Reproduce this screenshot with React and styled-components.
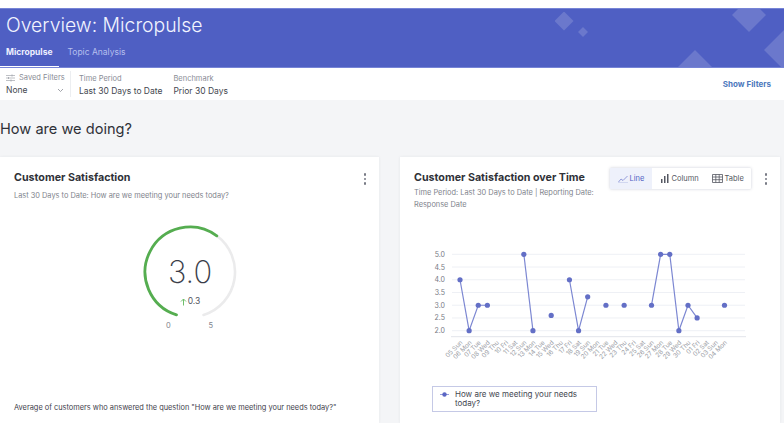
import React from "react";
import styled, { createGlobalStyle } from "styled-components";

const GlobalStyle = createGlobalStyle`
  html, body {
    margin: 0;
    padding: 0;
    background: #fff;
    overflow: hidden;
  }
  * {
    box-sizing: border-box;
  }
`;

const Page = styled.div`
  display: flex;
  flex-direction: column;
  width: 784px;
  height: 415px;
  margin-top: 8px;
  overflow: hidden;
  background: #f4f5f7;
  font-family: Inter, "Liberation Sans", sans-serif;
  color: #33363f;
`;

const Header = styled.header`
  position: relative;
  flex: none;
  height: 60px;
  overflow: hidden;
  background: #4f5fc3;
  border-top: 1px solid #7684d6;
  border-bottom: 1px solid #7684d6;
`;

const Diamond = styled.span`
  position: absolute;
  left: ${p => p.$x - p.$r}px;
  top: ${p => p.$y - p.$r - 9}px;
  width: ${p => p.$r * 2}px;
  height: ${p => p.$r * 2}px;
  background: rgba(255, 255, 255, 0.16);
  clip-path: polygon(50% 0, 100% 50%, 50% 100%, 0 50%);
`;

const Title = styled.h1`
  margin: 0;
  padding: 2px 0 0 6px;
  font-size: 19.4px;
  line-height: 29px;
  font-weight: 300;
  color: #f2f4ff;
`;

const Tabs = styled.nav`
  display: flex;
  gap: 9px;
  margin-top: 5px;
`;

const Tab = styled.div`
  padding: 0 ${p => (p.$active ? "7px" : "0")} 0 6px;
  margin-right: ${p => (p.$active ? "-7px" : "0")};
  height: 23px;
  font-size: 8.5px;
  line-height: 14px;
  font-weight: ${p => (p.$active ? 700 : 400)};
  color: ${p => (p.$active ? "#eef0ff" : "#b6bfee")};
  border-bottom: ${p => (p.$active ? "2px solid #fff" : "none")};
`;

const FilterBar = styled.div`
  display: flex;
  flex: none;
  align-items: center;
  height: 32px;
  padding: 0 13px 0 6px;
  background: #fff;
`;

const SavedFilter = styled.div`
  width: 65px;
  height: 26px;
  padding-right: 6px;
  border-right: 1px solid #eceef1;
`;

const Filter = styled.div`
  margin-left: ${p => p.$gap}px;
`;

const FilterLabel = styled.div`
  display: flex;
  align-items: center;
  gap: 4px;
  height: 13px;
  font-size: 7.5px;
  color: #8a8d96;
  white-space: nowrap;
`;

const FilterValue = styled.div`
  display: flex;
  align-items: center;
  justify-content: space-between;
  height: 12px;
  font-size: 8.5px;
  color: #444750;
  white-space: nowrap;
`;

const ShowFilters = styled.div`
  margin-left: auto;
  font-size: 8px;
  font-weight: 700;
  color: #4c79bd;
`;

const Heading = styled.h2`
  flex: none;
  margin: 0;
  padding-top: 20px;
  height: 57px;
  font-size: 14.6px;
  line-height: 19px;
  font-weight: 400;
  color: #2f3138;
`;

const Cards = styled.div`
  display: grid;
  flex: 1;
  grid-template-columns: 379px 380px;
  gap: 21px;
`;

const Card = styled.section`
  display: flex;
  flex-direction: column;
  min-width: 0;
  padding: 14px 0 0 14px;
  background: #fff;
  box-shadow: 0 0 3px rgba(30, 40, 70, 0.07);
`;

const CardTop = styled.div`
  display: flex;
  align-items: flex-start;
`;

const CardHeading = styled.div`
  flex: 1;
  min-width: 0;
`;

const CardTitle = styled.h3`
  margin: 0;
  font-size: 10.7px;
  line-height: 13px;
  font-weight: 700;
  color: #2f3138;
  white-space: nowrap;
`;

const CardNote = styled.p`
  width: ${p => p.$width || "auto"};
  margin: ${p => p.$top || 6}px 0 0;
  font-size: 7.4px;
  line-height: 12px;
  color: #80838c;
`;

const Kebab = styled.div`
  display: flex;
  flex: none;
  flex-direction: column;
  gap: 2px;
  margin: 2px 13px 0 0;
  & > i {
    display: block;
    width: 2.5px;
    height: 2.5px;
    border-radius: 50%;
    background: #777a84;
  }
`;

const Segments = styled.div`
  display: flex;
  flex: none;
  height: 21px;
  margin: -3px 14px 0 0;
  background: #fff;
  box-shadow: 0 0 3px rgba(40, 50, 90, 0.25);
  border-radius: 1px;
`;

const Segment = styled.div`
  display: flex;
  align-items: center;
  gap: 2px;
  width: ${p => p.$width}px;
  padding-left: 8px;
  font-size: 7.5px;
  color: ${p => (p.$active ? "#4f5fc3" : "#555862")};
  background: ${p => (p.$active ? "#eef1fb" : "transparent")};
`;

const GaugeWrap = styled.div`
  position: relative;
  width: 100px;
  height: 118px;
  margin: 16px 0 0 126px;
`;

const GaugeText = styled.div`
  position: absolute;
  top: 35px;
  left: 0;
  width: 100%;
  text-align: center;
`;

const GaugeValue = styled.div`
  font-size: 31px;
  line-height: 38px;
  font-weight: 200;
  color: #3a3d49;
`;

const GaugeDelta = styled.div`
  display: flex;
  align-items: center;
  justify-content: center;
  gap: 1px;
  margin-top: 5px;
  font-size: 8.5px;
  line-height: 11px;
  color: #555862;
`;

const GaugeScale = styled.div`
  position: absolute;
  top: 103px;
  left: 26px;
  display: flex;
  justify-content: space-between;
  width: 47px;
  font-size: 7.5px;
  color: #80838c;
`;

const Footnote = styled.p`
  margin: auto 0 9px;
  font-size: 7.4px;
  line-height: 12px;
  color: #3f424c;
  white-space: nowrap;
`;

const ChartBody = styled.div`
  margin: 29px 0 0 -14px;
`;

const Legend = styled.div`
  display: flex;
  align-items: flex-start;
  gap: 6px;
  width: 165px;
  height: 26px;
  margin: 11px 0 0 32px;
  padding: 3px 8px 0 7px;
  border: 1px solid #c5c9e6;
  font-size: 8px;
  line-height: 9px;
  color: #444750;
`;

const Ticks = ["5.0", "4.5", "4.0", "3.5", "3.0", "2.5", "2.0"];
const Days = [
  "05 Sun", "06 Mon", "07 Tue", "08 Wed", "09 Thu", "10 Fri", "11 Sat", "12 Sun", "13 Mon", "14 Tue",
  "15 Wed", "16 Thu", "17 Fri", "18 Sat", "19 Sun", "20 Mon", "21 Tue", "22 Wed", "23 Thu", "24 Fri",
  "25 Sat", "26 Sun", "27 Mon", "28 Tue", "29 Wed", "30 Thu", "01 Fri", "02 Sat", "03 Sun", "04 Mon"
];
// null = no responses that day, breaks the line
const Scores = [
  4, 2, 3, 3, null, null, null, 5, 2, null, 2.6, null, 4, 2, 3.33, null, 3, null, 3, null, null, 3, 5, 5, 2, 3,
  2.5, null, null, 3
];

const xAt = i => 460 + i * 9.12;
const yAt = v => 330.7 - (v - 2) * 25.47;

function lineSegments() {
  const runs = [];
  let run = [];
  Scores.forEach((v, i) => {
    if (v === null) {
      if (run.length > 1) runs.push(run);
      run = [];
    } else {
      run.push(`${xAt(i)},${yAt(v)}`);
    }
  });
  if (run.length > 1) runs.push(run);
  return runs.map(r => r.join(" "));
}

function LineChart() {
  return (
    <svg width="380" height="135" viewBox="400 240 380 135" style={{ display: "block" }}>
      {Ticks.map(t => (
        <g key={t}>
          <line x1="452" x2="745" y1={yAt(+t)} y2={yAt(+t)} stroke="#eef0f5" strokeWidth="1" />
          <text x="445" y={yAt(+t) + 2.5} textAnchor="end" fontSize="7" fill="#777a84">
            {t}
          </text>
        </g>
      ))}
      <line x1="451" x2="746" y1="336.7" y2="336.7" stroke="#e2e4ea" />
      {lineSegments().map(p => (
        <polyline key={p} points={p} fill="none" stroke="#7c87d2" strokeWidth="1.2" />
      ))}
      {Scores.map((v, i) => v !== null && <circle key={i} cx={xAt(i)} cy={yAt(v)} r="2.6" fill="#636fc6" />)}
      {Days.map((d, i) => (
        <text
          key={d}
          x={xAt(i) + 3}
          y="343"
          textAnchor="end"
          fontSize="6.4"
          fill="#9a9da5"
          transform={`rotate(-45 ${xAt(i) + 3} 343)`}
        >
          {d}
        </text>
      ))}
    </svg>
  );
}

function Gauge() {
  return (
    <GaugeWrap>
      <svg width="100" height="100" viewBox="140 218 100 100" style={{ display: "block" }}>
        <path d="M216.8 235.8 A45 45 0 0 1 203.5 314.9" fill="none" stroke="#ebebec" strokeWidth="2.6" strokeLinecap="round" />
        <path d="M176.5 314.9 A45 45 0 1 1 216.8 235.8" fill="none" stroke="#55ad50" strokeWidth="2.8" strokeLinecap="round" />
      </svg>
      <GaugeText>
        <GaugeValue>3.0</GaugeValue>
        <GaugeDelta>
          <svg width="7" height="8" viewBox="0 0 7 8">
            <path d="M3.5 7.5V1M1 3.5 3.5 1 6 3.5" fill="none" stroke="#6fbf6b" strokeWidth="1" />
          </svg>
          0.3
        </GaugeDelta>
      </GaugeText>
      <GaugeScale>
        <span>0</span>
        <span>5</span>
      </GaugeScale>
    </GaugeWrap>
  );
}

const Dots = () => (
  <Kebab>
    <i />
    <i />
    <i />
  </Kebab>
);

export default function App() {
  return (
    <>
      <GlobalStyle />
      <Page>
        <Header>
          <Diamond $x={564} $y={21} $r={9.5} />
          <Diamond $x={583} $y={32} $r={5} />
          <Diamond $x={749} $y={15} $r={17} />
          <Diamond $x={695} $y={68} $r={18} />
          <Diamond $x={785} $y={50} $r={21} />
          <Title>Overview: Micropulse</Title>
          <Tabs>
            <Tab $active>Micropulse</Tab>
            <Tab>Topic Analysis</Tab>
          </Tabs>
        </Header>
        <FilterBar>
          <SavedFilter>
            <FilterLabel>
              <svg width="9" height="8" viewBox="0 0 9 8" style={{ flex: "none" }}>
                <path d="M0 1.5h9M0 4h9M0 6.5h9" stroke="#a3a6ae" strokeWidth=".7" />
                <path d="M6 .5v2M2.5 3v2M5 5.5v2" stroke="#a3a6ae" strokeWidth=".9" />
              </svg>
              Saved Filters
            </FilterLabel>
            <FilterValue>
              None
              <svg width="7" height="5" viewBox="0 0 7 5">
                <path d="M1 1l2.5 2.5L6 1" fill="none" stroke="#8a8d96" strokeWidth=".8" />
              </svg>
            </FilterValue>
          </SavedFilter>
          <Filter $gap={8}>
            <FilterLabel>Time Period</FilterLabel>
            <FilterValue>Last 30 Days to Date</FilterValue>
          </Filter>
          <Filter $gap={11}>
            <FilterLabel>Benchmark</FilterLabel>
            <FilterValue>Prior 30 Days</FilterValue>
          </Filter>
          <ShowFilters>Show Filters</ShowFilters>
        </FilterBar>
        <Heading>How are we doing?</Heading>
        <Cards>
          <Card>
            <CardTop>
              <CardHeading>
                <CardTitle>Customer Satisfaction</CardTitle>
                <CardNote>Last 30 Days to Date: How are we meeting your needs today?</CardNote>
              </CardHeading>
              <Dots />
            </CardTop>
            <Gauge />
            <Footnote>Average of customers who answered the question "How are we meeting your needs today?"</Footnote>
          </Card>
          <Card>
            <CardTop>
              <CardHeading>
                <CardTitle>Customer Satisfaction over Time</CardTitle>
                <CardNote $width="186px" $top={3}>
                  Time Period: Last 30 Days to Date | Reporting Date: Response Date
                </CardNote>
              </CardHeading>
              <Segments>
                <Segment $active $width={42}>
                  <svg width="10" height="8" viewBox="0 0 10 8">
                    <path d="M.5 7 3 4l2 1.5L9.5 1" fill="none" stroke="#7c87d2" strokeWidth=".8" />
                    <path d="M0 7.6h10" stroke="#b9bfe6" strokeWidth=".6" />
                  </svg>
                  Line
                </Segment>
                <Segment $width={52}>
                  <svg width="10" height="9" viewBox="0 0 10 9">
                    <path d="M1 9V5h1.5v4zM4 9V2h1.5v7zM7 9V0h1.5v9z" fill="#555862" />
                  </svg>
                  Column
                </Segment>
                <Segment $width={47}>
                  <svg width="11" height="9" viewBox="0 0 11 9">
                    <path d="M.5.5h10v8H.5zM.5 3h10M.5 5.7h10M3.8.5v8M7.2.5v8" fill="none" stroke="#555862" strokeWidth=".8" />
                  </svg>
                  Table
                </Segment>
              </Segments>
              <Dots />
            </CardTop>
            <ChartBody>
              <LineChart />
              <Legend>
                <svg width="9" height="9" viewBox="0 0 9 9" style={{ flex: "none" }}>
                  <path d="M0 4.5h9" stroke="#7c87d2" strokeWidth=".8" />
                  <circle cx="4.5" cy="4.5" r="2.2" fill="#5a66c4" />
                </svg>
                How are we meeting your needs today?
              </Legend>
            </ChartBody>
          </Card>
        </Cards>
      </Page>
    </>
  );
}
